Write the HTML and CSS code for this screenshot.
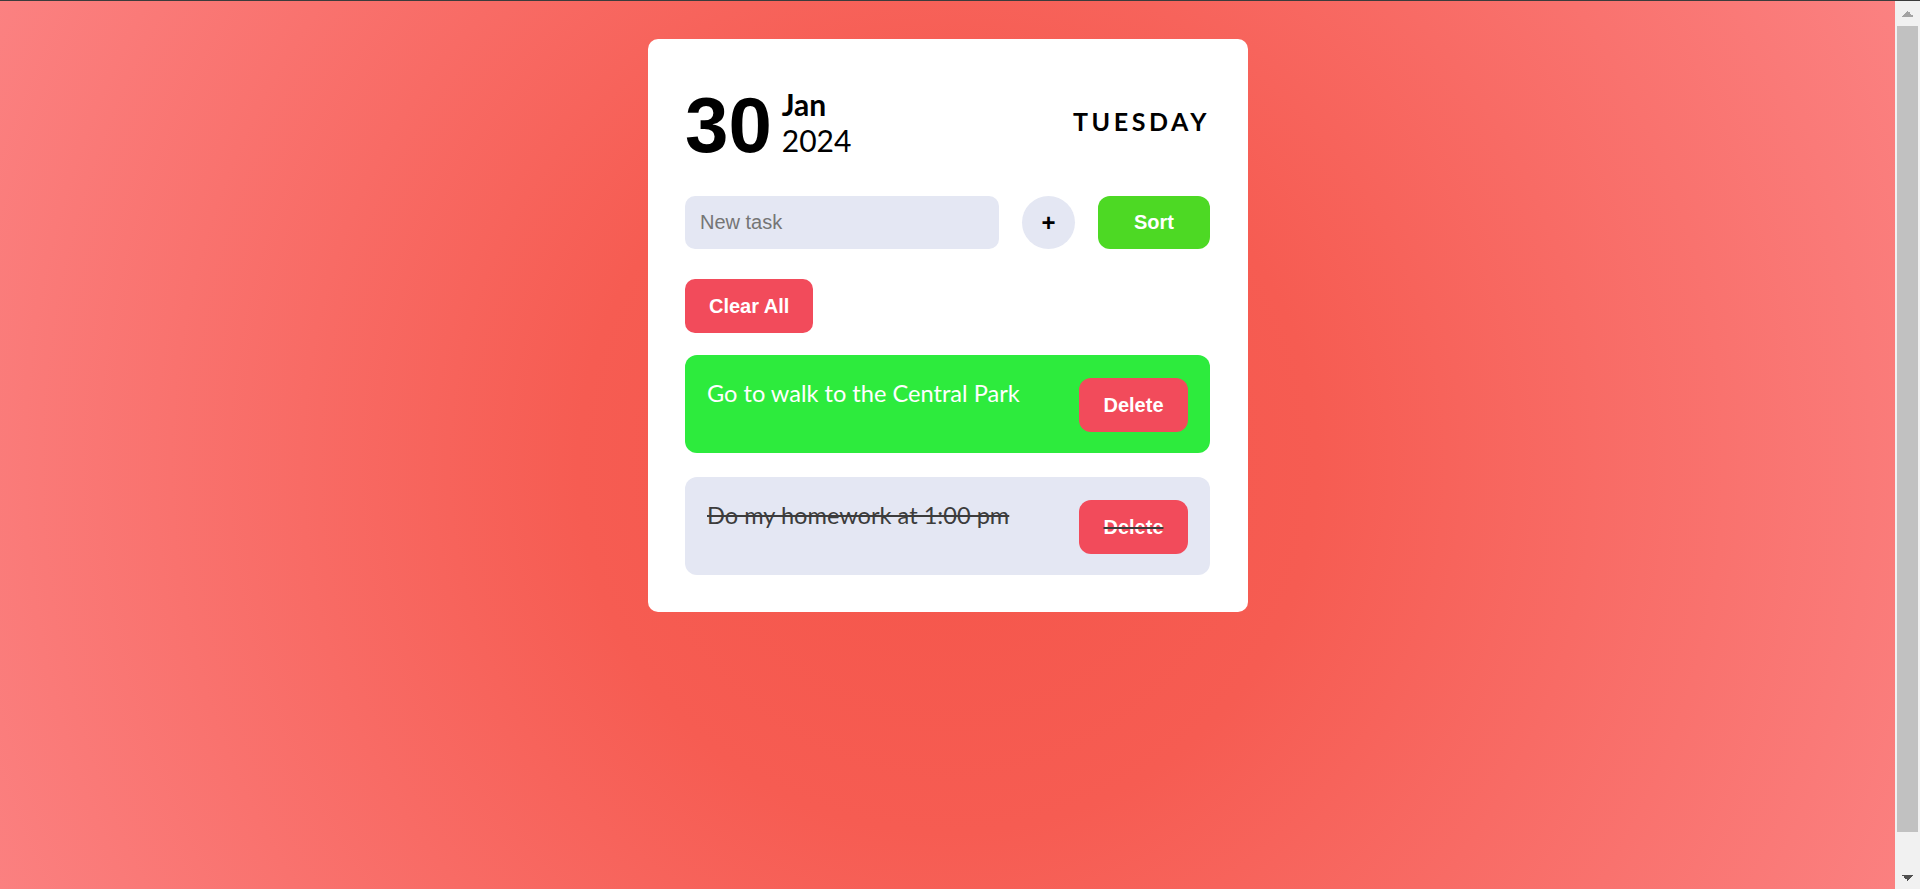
FILE: index.html
```html
<!DOCTYPE html>
<html lang="en">
<head>
<meta charset="utf-8">
<title>To-do</title>
<link rel="stylesheet" href="styles.css">
</head>
<body>
<div class="screen">
  <div class="viewport">
    <div class="page">
      <div class="card">
        <div class="header">
          <div class="date">
            <span class="day">30</span>
            <div class="month-year">
              <span class="month">Jan</span>
              <span class="year">2024</span>
            </div>
          </div>
          <div class="weekday">TUESDAY</div>
        </div>
        <div class="input-row">
          <input class="task-input" type="text" placeholder="New task">
          <button class="add-btn">+</button>
          <button class="sort-btn">Sort</button>
        </div>
        <button class="clear-btn">Clear All</button>
        <ul class="task-list">
          <li class="task task-green">
            <span class="task-text">Go to walk to the Central Park</span>
            <button class="delete-btn">Delete</button>
          </li>
          <li class="task task-done">
            <span class="task-text">Do my homework at 1:00 pm</span>
            <button class="delete-btn">Delete</button>
          </li>
        </ul>
      </div>
    </div>
  </div>
  <div class="scrollbar" aria-hidden="true">
    <div class="sb-btn sb-up"></div>
    <div class="sb-track"><div class="sb-thumb"></div></div>
    <div class="sb-btn sb-down"></div>
  </div>
</div>
</body>
</html>
```

FILE: styles.css
```css
html,
body {
  margin: 0;
  height: 100%;
  overflow: hidden;
}

body {
  font-family: "Lato", "Liberation Sans", sans-serif;
}

.screen {
  display: flex;
  height: 100vh;
  box-sizing: border-box;
  border-top: 1px solid #3c3c3c;
  overflow: hidden;
}

.viewport {
  flex: 1;
  min-width: 0;
  overflow: hidden;
}

.page {
  min-height: 925px;
  box-sizing: border-box;
  padding-top: 38px;
  display: flex;
  justify-content: center;
  align-items: flex-start;
  background: radial-gradient(circle at 50% 50%, #f5554a 0%, #f65c52 35%, #fb8181 100%);
}

.card {
  width: 600px;
  box-sizing: border-box;
  background: #ffffff;
  border-radius: 10px;
  padding: 47px 37.5px 37px;
}

.header {
  display: flex;
  justify-content: space-between;
  align-items: flex-start;
  height: 78px;
}

.date {
  display: flex;
  align-items: flex-start;
}

.day {
  font-family: "Liberation Sans", Arial, sans-serif;
  font-weight: 700;
  font-size: 78px;
  line-height: 78px;
  color: #000;
}

.month-year {
  display: flex;
  flex-direction: column;
  margin-left: 10px;
}

.month {
  font-weight: 700;
  font-size: 30px;
  line-height: 36px;
  color: #000;
}

.year {
  font-weight: 400;
  font-size: 30px;
  line-height: 36px;
  color: #000;
}

.weekday {
  margin-top: 20px;
  font-weight: 700;
  font-size: 25px;
  line-height: 30px;
  letter-spacing: 3.6px;
  color: #000;
}

.input-row {
  display: flex;
  align-items: center;
  gap: 23px;
  margin-top: 32px;
}

.task-input {
  flex: 1;
  min-width: 0;
  height: 53px;
  box-sizing: border-box;
  border: none;
  outline: none;
  border-radius: 10px;
  background: #e4e7f3;
  padding: 0 15px;
  font-family: "Liberation Sans", Arial, sans-serif;
  font-size: 20px;
  color: #333;
}

.task-input::placeholder {
  color: #757575;
}

button {
  border: none;
  cursor: pointer;
  font-family: "Liberation Sans", Arial, sans-serif;
  font-weight: 700;
  font-size: 20px;
  color: #ffffff;
}

.add-btn {
  width: 53px;
  height: 53px;
  border-radius: 50%;
  background: #e4e7f3;
  color: #000;
  font-size: 24px;
  padding: 0;
}

.sort-btn {
  width: 112px;
  height: 53px;
  border-radius: 12px;
  background: #4dd924;
  padding: 0;
}

.clear-btn {
  display: block;
  margin-top: 30px;
  height: 54px;
  padding: 0 24px;
  border-radius: 10px;
  background: #f24b5b;
}

.task-list {
  list-style: none;
  margin: 22px 0 0;
  padding: 0;
  display: flex;
  flex-direction: column;
  gap: 24px;
}

.task {
  display: flex;
  justify-content: space-between;
  align-items: flex-start;
  height: 98px;
  box-sizing: border-box;
  padding: 23px 22px 21px 22px;
  border-radius: 12px;
}

.task-green {
  background: #2deb3d;
}

.task-done {
  background: #e4e7f3;
}

.task-text {
  padding-top: 1px;
  font-size: 23.6px;
  line-height: 28px;
}

.task-green .task-text {
  color: #ffffff;
}

.task-done .task-text {
  color: #3c3c3c;
  text-decoration: line-through;
  text-decoration-color: #3c3c3c;
}

.delete-btn {
  height: 54px;
  width: 109px;
  padding: 0;
  border-radius: 12px;
  background: #f24b5b;
  flex-shrink: 0;
}

.task-done .delete-btn {
  text-decoration: line-through;
  text-decoration-color: #3c3c3c;
  text-decoration-thickness: 2px;
}

/* window scrollbar */
.scrollbar {
  width: 25px;
  flex-shrink: 0;
  display: flex;
  flex-direction: column;
  background: #f1f1f1;
}

.sb-btn {
  background-repeat: no-repeat;
  background-size: 6px 6px, 6px 6px;
}

.sb-up {
  height: 24px;
  background-image:
    linear-gradient(to bottom right, transparent 50%, #a3a3a3 50%),
    linear-gradient(to bottom left, transparent 50%, #a3a3a3 50%);
  background-position: 6.5px 10px, 12.5px 10px;
}

.sb-down {
  height: 25px;
  background-image:
    linear-gradient(to top right, transparent 50%, #505050 50%),
    linear-gradient(to top left, transparent 50%, #505050 50%);
  background-position: 6.5px 11px, 12.5px 11px;
}

.sb-track {
  flex: 1;
  display: flex;
  flex-direction: column;
  padding: 1px 2px 32px;
}

.sb-thumb {
  flex: 1;
  background: #c1c1c1;
}
```
